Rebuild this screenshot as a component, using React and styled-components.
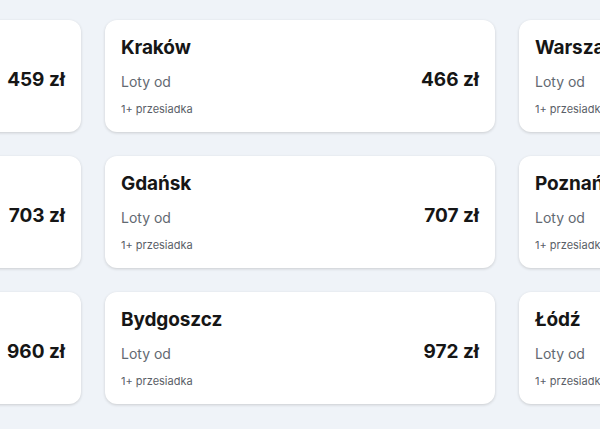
import React from "react";
import styled, { createGlobalStyle } from "styled-components";

const GlobalStyle = createGlobalStyle`
  html, body {
    margin: 0;
    padding: 0;
    background: #eff3f8;
    overflow: hidden;
  }
  body {
    font-family: Inter, "Noto Sans", "Liberation Sans", sans-serif;
    color: #161616;
  }
`;

// Stylesheet

const Page = styled.div`
  width: 600px;
  height: 429px;
  overflow: hidden;
  padding-top: 20px;
  box-sizing: border-box;
`;

const Grid = styled.div`
  display: grid;
  grid-template-columns: repeat(3, 390px);
  grid-auto-rows: 112px;
  column-gap: 24px;
  row-gap: 24px;
  margin-left: -309px;
  width: 1218px;
`;

const Card = styled.a`
  display: flex;
  flex-direction: column;
  box-sizing: border-box;
  padding: 16px;
  background: #ffffff;
  border-radius: 12px;
  box-shadow: 0 1px 3px rgba(37, 32, 31, 0.18);
  text-decoration: none;
  color: inherit;
`;

const City = styled.h3`
  margin: 0;
  font-size: 19px;
  line-height: 24px;
  font-weight: 700;
  letter-spacing: -0.1px;
  color: #161616;
`;

const PriceRow = styled.div`
  display: flex;
  justify-content: space-between;
  align-items: center;
  margin-top: 8px;
  height: 24px;
`;

const Label = styled.span`
  font-size: 14px;
  line-height: 20px;
  color: #626971;
  padding-top: 4px;
`;

const Price = styled.span`
  font-size: 19px;
  line-height: 24px;
  font-weight: 700;
  color: #161616;
`;

const Stops = styled.span`
  margin-top: 9px;
  font-size: 11px;
  line-height: 16px;
  color: #5a6068;
`;

const flights = [
  { city: "Gdańsk", price: 459 },
  { city: "Kraków", price: 466 },
  { city: "Warszawa", price: 489 },
  { city: "Wrocław", price: 703 },
  { city: "Gdańsk", price: 707 },
  { city: "Poznań", price: 715 },
  { city: "Katowice", price: 960 },
  { city: "Bydgoszcz", price: 972 },
  { city: "Łódź", price: 985 }
];

export default function App() {
  return (
    <>
      <GlobalStyle />
      <Page>
        <Grid>
          {flights.map((f, index) => (
            <Card key={`flight-${index}`} href="#">
              <City>{f.city}</City>
              <PriceRow>
                <Label>Loty od</Label>
                <Price>{f.price} zł</Price>
              </PriceRow>
              <Stops>1+ przesiadka</Stops>
            </Card>
          ))}
        </Grid>
      </Page>
    </>
  );
}
